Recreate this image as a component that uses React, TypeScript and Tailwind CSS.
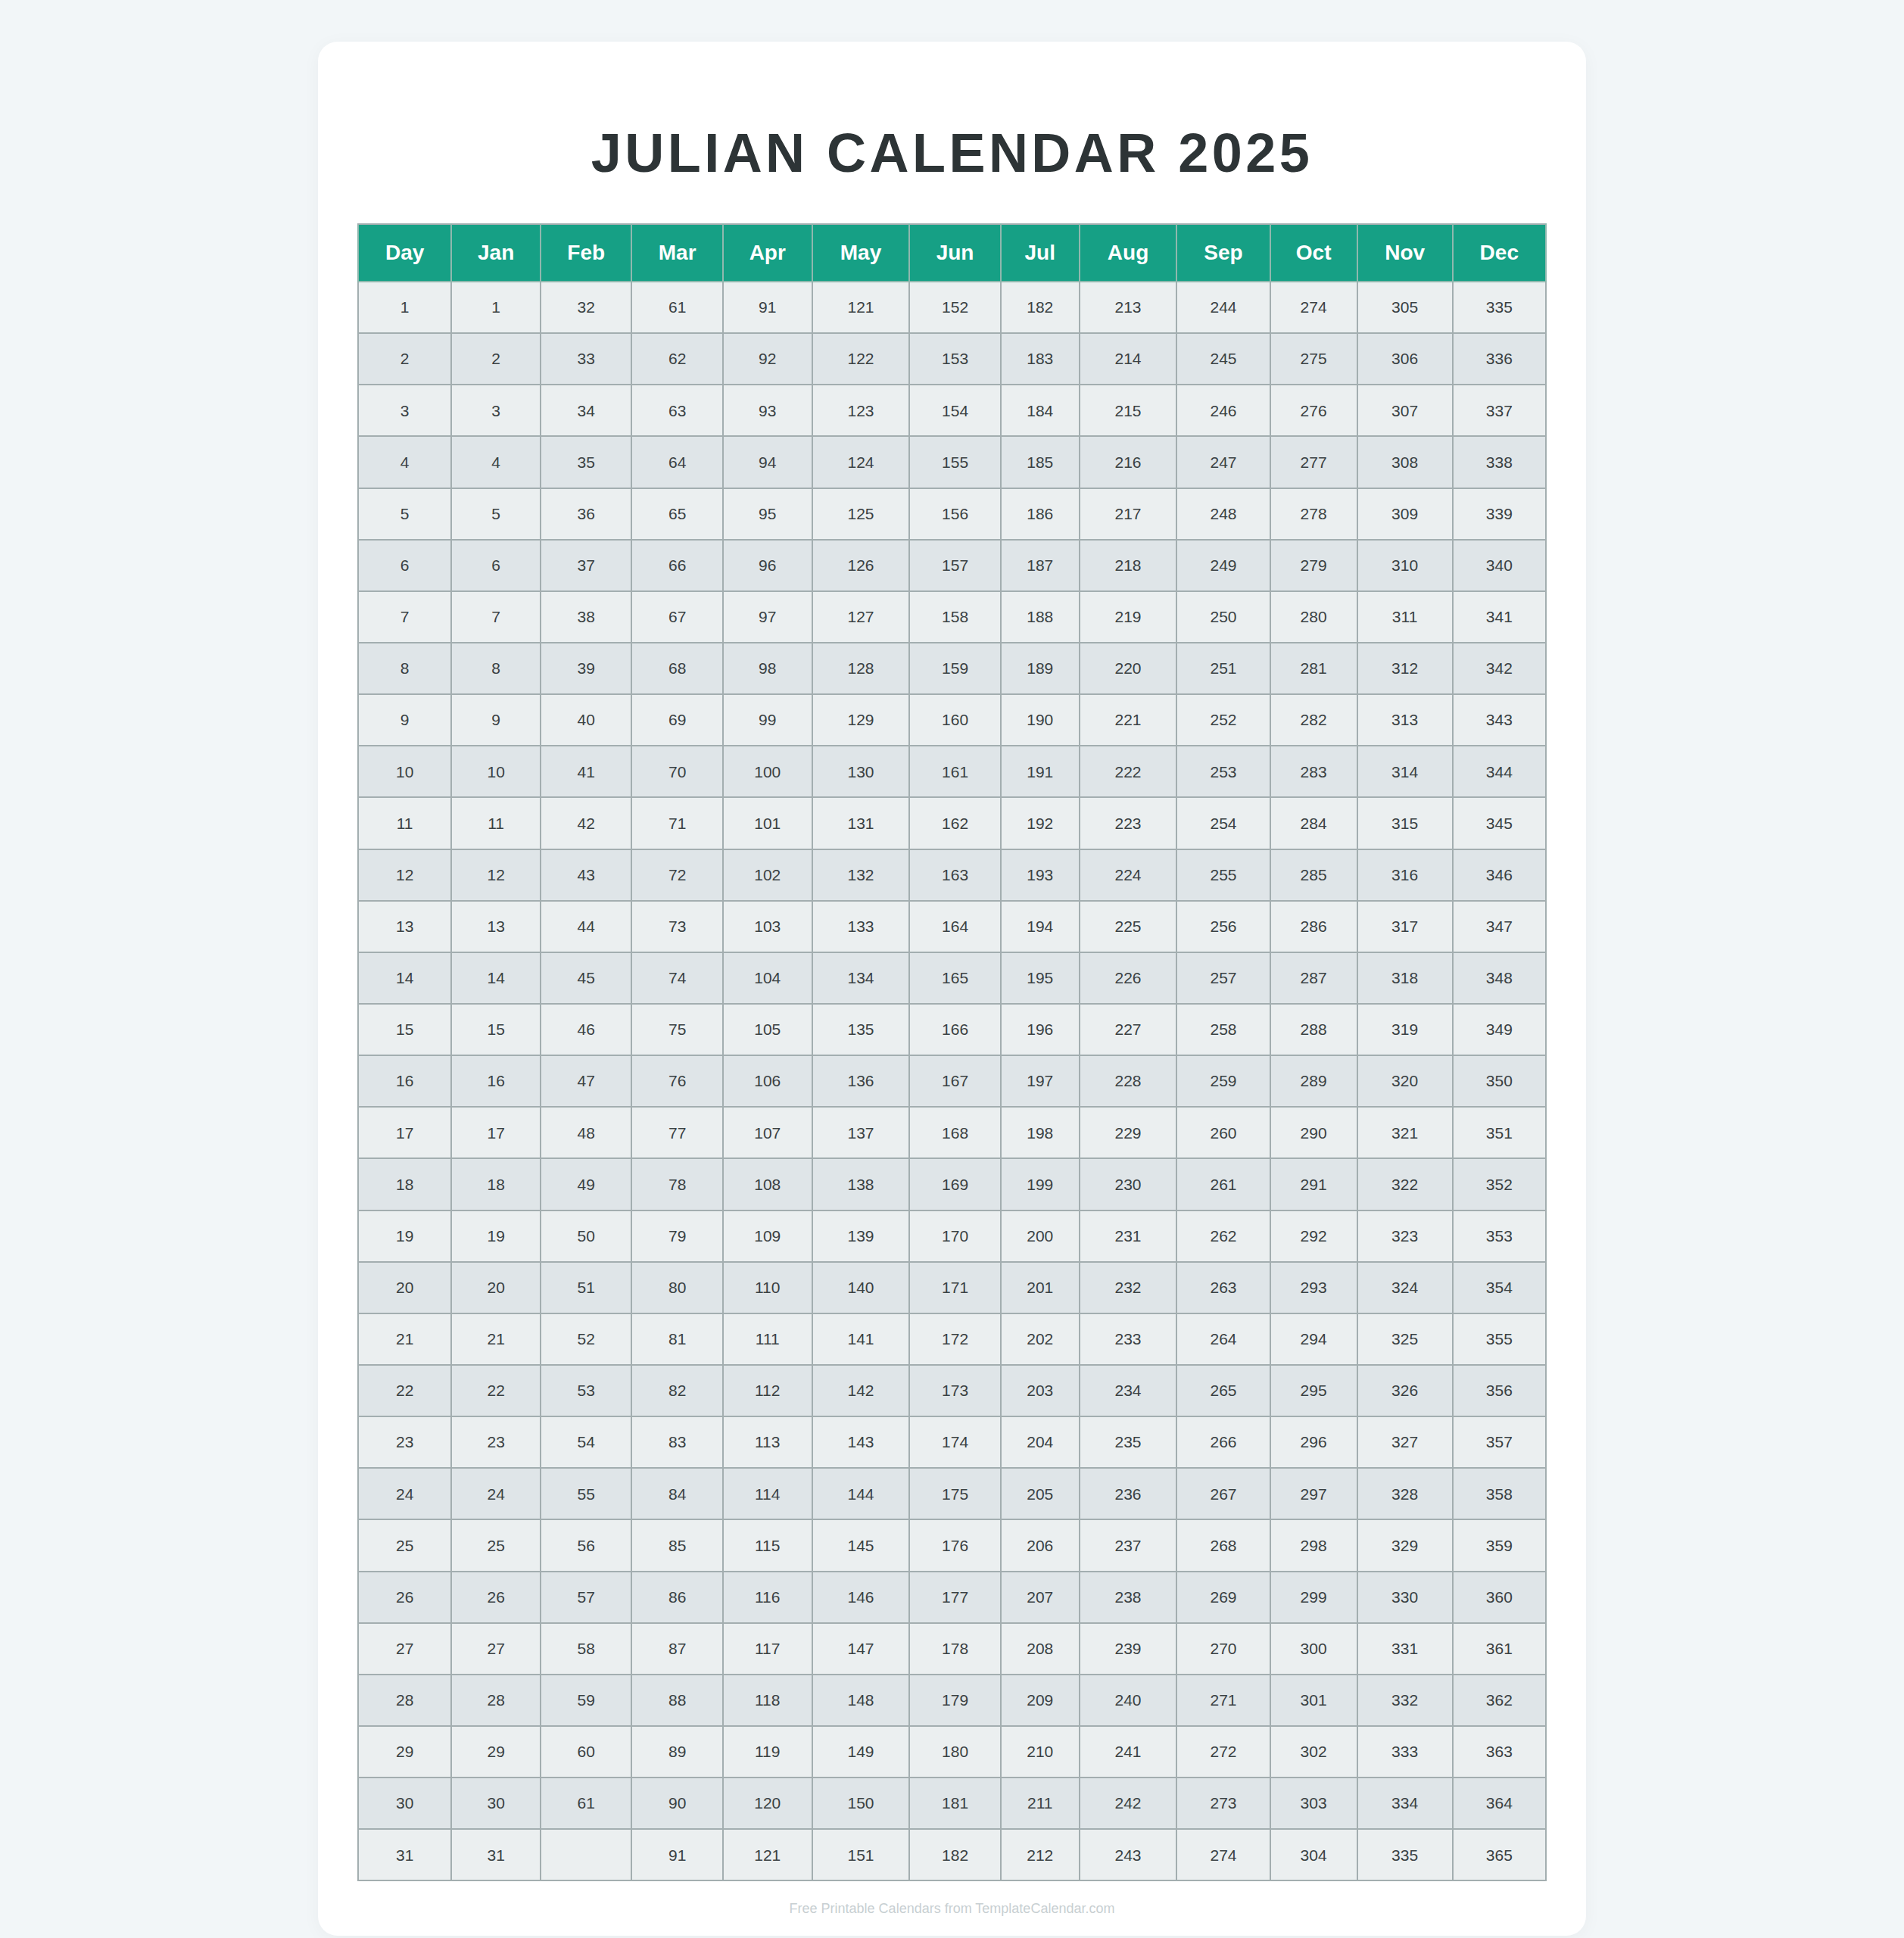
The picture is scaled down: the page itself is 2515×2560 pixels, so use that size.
import React from "react";

const MONTHS = ["Jan", "Feb", "Mar", "Apr", "May", "Jun", "Jul", "Aug", "Sep", "Oct", "Nov", "Dec"];
// offsets as printed on the sheet; only Feb gets a blank on day 31
const OFFSETS = [0, 31, 60, 90, 120, 151, 181, 212, 243, 273, 304, 334];

function cellValue(day: number, month: number) {
  if (month === 1 && day === 31) return "";
  return OFFSETS[month] + day;
}

export default function App() {
  const days = Array.from({ length: 31 }, (_, i) => i + 1);

  return (
    <div className="min-h-screen bg-[#f2f6f8] pt-[55px] pb-[5px] font-['Liberation_Sans',Arial,sans-serif]">
      <div className="mx-auto w-[1675px] rounded-[26px] bg-white px-[52px] pt-[111px] pb-[27px] shadow-[0_4px_24px_rgba(0,0,0,0.04)]">
        <h1 className="mb-[57px] text-center text-[72px] font-bold leading-none tracking-[0.062em] text-[#2d3436]">
          JULIAN CALENDAR 2025
        </h1>

        <table className="w-full border-collapse border-2 border-[#a3aeb0] text-center">
          <thead>
            <tr className="h-[76px] bg-[#16a085]">
              <th className="border-2 border-[#8fb8ae] border-t-[#a3aeb0] px-2 text-[28px] font-bold text-white">Day</th>
              {MONTHS.map((m) => (
                <th key={m} className="border-2 border-[#8fb8ae] border-t-[#a3aeb0] px-2 text-[28px] font-bold text-white">
                  {m}
                </th>
              ))}
            </tr>
          </thead>
          <tbody>
            {days.map((d) => (
              <tr key={d} className={`h-[68.15px] ${d % 2 === 0 ? "bg-[#dfe5e8]" : "bg-[#ebeff0]"}`}>
                <td className="border-2 border-[#a3aeb0] px-2 text-[21px] text-[#3a4143]">{d}</td>
                {MONTHS.map((m, i) => (
                  <td key={m} className="border-2 border-[#a3aeb0] px-2 text-[21px] text-[#3a4143]">
                    {cellValue(d, i)}
                  </td>
                ))}
              </tr>
            ))}
          </tbody>
        </table>

        <p className="mt-[27px] text-center text-[18px] leading-none text-[#c8cfd2]">
          Free Printable Calendars from TemplateCalendar.com
        </p>
      </div>
    </div>
  );
}
